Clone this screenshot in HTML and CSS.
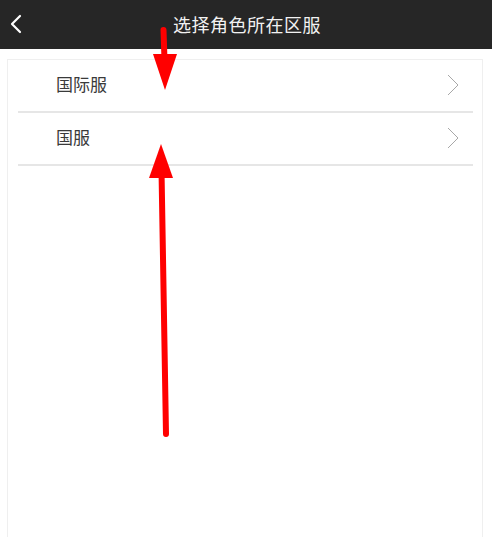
FILE: index.html
```html
<!DOCTYPE html>
<html lang="zh-CN">
<head>
    <meta charset="UTF-8">
    <meta name="viewport" content="width=device-width, initial-scale=1.0">
    <title>选择角色所在区服</title>
    <link rel="stylesheet" href="styles.css">
</head>
<body>
    <div class="topbar">
        <a class="back" href="#">
            <svg width="14" height="22" viewBox="0 0 14 22">
                <path d="M11 3 L3 11 L11 19" fill="none" stroke="#fff" stroke-width="2.2" stroke-linecap="round" stroke-linejoin="round"/>
            </svg>
        </a>
        <div class="title">选择角色所在区服</div>
    </div>

    <div class="page">
        <div class="list">
            <div class="row">
                <span>国际服</span>
                <svg class="arrow" width="12" height="22" viewBox="0 0 12 22">
                    <path d="M1 1 L11 11 L1 21" fill="none" stroke="#a8a8a8" stroke-width="1"/>
                </svg>
            </div>
            <div class="row">
                <span>国服</span>
                <svg class="arrow" width="12" height="22" viewBox="0 0 12 22">
                    <path d="M1 1 L11 11 L1 21" fill="none" stroke="#a8a8a8" stroke-width="1"/>
                </svg>
            </div>
        </div>
    </div>

    <!-- red annotation arrows drawn over the screenshot -->
    <svg class="marks" width="492" height="537" viewBox="0 0 492 537">
        <line x1="163.5" y1="30" x2="164.5" y2="60" stroke="#ff0000" stroke-width="6" stroke-linecap="round"/>
        <polygon points="153,54 177,54 165,90" fill="#ff0000"/>
        <line x1="161.5" y1="170" x2="166" y2="434" stroke="#ff0000" stroke-width="6" stroke-linecap="round"/>
        <polygon points="161,144 149,178 173,178" fill="#ff0000"/>
    </svg>
</body>
</html>
```

FILE: styles.css
```css
body{
    margin: 0;
    background: #fff;
    font-family: "Noto Sans CJK SC", "Noto Sans", sans-serif;
    height: 537px;
    overflow: hidden;
    position: relative;
}
.topbar{
    height: 49px;
    background-color: #262626;
    display: flex;
    align-items: center;
    justify-content: center;
    position: relative;
}
.back{
    position: absolute;
    left: 9px;
    top: 13px;
    display: flex;
}
.title{
    color: #f2f2f2;
    font-size: 18px;
    letter-spacing: 0.5px;
    margin-left: 2px;
    margin-top: -2px;
}
.page{
    padding: 10px 9px 0 7px;
}
.list{
    border: 1px solid #efefef;
    border-bottom: none;
    height: 480px;
    padding: 0 9px 0 10px;
}
.row{
    height: 51px;
    border-bottom: 2px solid #e6e6e6;
    display: flex;
    align-items: center;
    justify-content: space-between;
    padding-left: 38px;
    padding-right: 14px;
    color: #3a3a3a;
    font-size: 17px;
}
.row span{
    margin-top: -4px;
}
.arrow{
    margin-top: -2px;
}
.marks{
    position: absolute;
    left: 0;
    top: 0;
    pointer-events: none;
}
```
